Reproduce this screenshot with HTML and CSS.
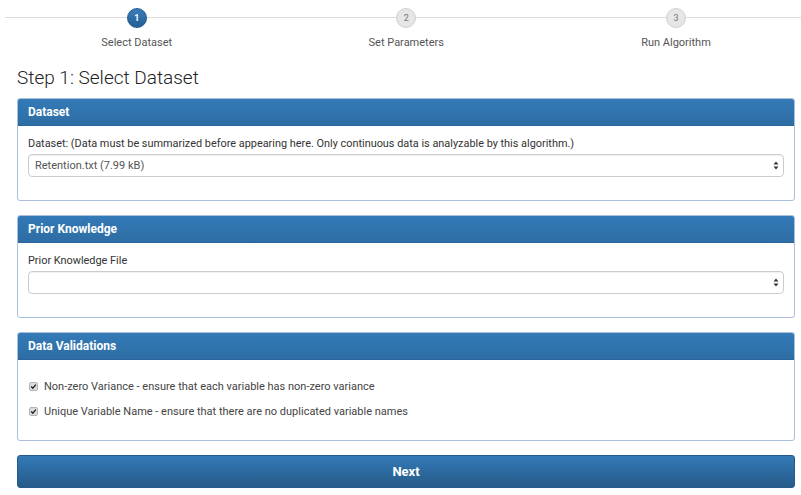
FILE: index.html
```html
<!DOCTYPE html>
<html>
<head>
<meta charset="utf-8">
<link rel="stylesheet" href="styles.css">
</head>
<body>
<div class="stepper">
  <div class="step active"><div class="dot">1</div><div class="step-label">Select Dataset</div></div>
  <div class="step"><div class="dot">2</div><div class="step-label">Set Parameters</div></div>
  <div class="step last"><div class="dot">3</div><div class="step-label">Run Algorithm</div></div>
</div>
<div class="content">
  <h2 class="title">Step 1: Select Dataset</h2>

  <div class="panel">
    <div class="panel-heading">Dataset</div>
    <div class="panel-body">
      <div class="label">Dataset: (Data must be summarized before appearing here. Only continuous data is analyzable by this algorithm.)</div>
      <div class="select"><span>Retention.txt (7.99 kB)</span>
        <svg class="arrows" width="6" height="9" viewBox="0 0 6 9"><path d="M3 0.5 L5.5 3.5 L0.5 3.5 Z M3 8.5 L5.5 5.5 L0.5 5.5 Z" fill="#333"/></svg>
      </div>
    </div>
  </div>

  <div class="panel">
    <div class="panel-heading">Prior Knowledge</div>
    <div class="panel-body">
      <div class="label">Prior Knowledge File</div>
      <div class="select"><span></span>
        <svg class="arrows" width="6" height="9" viewBox="0 0 6 9"><path d="M3 0.5 L5.5 3.5 L0.5 3.5 Z M3 8.5 L5.5 5.5 L0.5 5.5 Z" fill="#333"/></svg>
      </div>
    </div>
  </div>

  <div class="panel">
    <div class="panel-heading">Data Validations</div>
    <div class="panel-body checks">
      <div class="check-row">
        <svg class="cb" width="9" height="9" viewBox="0 0 9 9"><rect x="0.5" y="0.5" width="8" height="8" rx="1.5" fill="#dcdcdc" stroke="#b5b5b5"/><path d="M2.2 4.6 L3.8 6.2 L6.8 2.6" fill="none" stroke="#222" stroke-width="1.4"/></svg>
        <span>Non-zero Variance - ensure that each variable has non-zero variance</span>
      </div>
      <div class="check-row">
        <svg class="cb" width="9" height="9" viewBox="0 0 9 9"><rect x="0.5" y="0.5" width="8" height="8" rx="1.5" fill="#dcdcdc" stroke="#b5b5b5"/><path d="M2.2 4.6 L3.8 6.2 L6.8 2.6" fill="none" stroke="#222" stroke-width="1.4"/></svg>
        <span>Unique Variable Name - ensure that there are no duplicated variable names</span>
      </div>
    </div>
  </div>

  <div class="btn">Next</div>
</div>
</body>
</html>
```
FILE: styles.css
```css
body {
  margin: 0;
  font-family: Roboto, "Liberation Sans", sans-serif;
  font-size: 11px;
  color: #333;
  background: #fff;
}
.stepper {
  position: relative;
  display: grid;
  grid-template-columns: 269.5px 269.5px 1fr;
  padding-left: 2px;
  height: 52px;
}
.stepper::before {
  content: "";
  position: absolute;
  top: 17px;
  left: 5px;
  right: 0;
  height: 1px;
  background: #dcdcdc;
}
.step {
  position: relative;
  display: flex;
  flex-direction: column;
  align-items: center;
}
.step.last {
  padding-left: 10px;
}
.dot {
  margin-top: 8px;
  width: 20px;
  height: 20px;
  box-sizing: border-box;
  border-radius: 50%;
  background: #e6e6e6;
  border: 1px solid #d0d0d0;
  color: #777;
  font-size: 9px;
  line-height: 18px;
  text-align: center;
}
.step.active .dot {
  background: linear-gradient(#3a7dbb, #245f96);
  border-color: #245a8e;
  color: #fff;
  font-weight: bold;
}
.step-label {
  margin-top: 8px;
  line-height: 14px;
  font-size: 11px;
  color: #555;
}
.content {
  margin: 0 6px 0 17px;
}
.title {
  margin: 14px 0 8px;
  font-size: 19px;
  font-weight: 300;
  line-height: 24px;
  color: #222;
}
.panel {
  border: 1px solid #a9bfdb;
  border-radius: 3px;
  margin-bottom: 14px;
  background: #fff;
  overflow: hidden;
}
.panel-heading {
  height: 26px;
  line-height: 26px;
  padding: 0 10px;
  background: linear-gradient(#337ab7, #2e6da4);
  border-bottom: 1px solid #2b64a0;
  color: #fff;
  font-weight: bold;
  font-size: 12px;
}
.panel-body {
  padding: 10px 10px 23px;
}
.label {
  line-height: 15px;
  margin-bottom: 3px;
  color: #333;
  font-size: 10.9px;
}
.select {
  height: 23px;
  box-sizing: border-box;
  border: 1px solid #ccc;
  border-radius: 4px;
  box-shadow: inset 0 1px 1px rgba(0,0,0,0.06);
  display: flex;
  align-items: center;
  justify-content: space-between;
  padding: 0 4px 0 6px;
  color: #555;
  font-size: 11px;
}
.checks {
  padding: 19px 10px 21px;
  display: flex;
  flex-direction: column;
  gap: 10px;
}
.check-row {
  display: flex;
  align-items: center;
  gap: 6px;
  height: 15px;
  padding-left: 1px;
  color: #444;
}
.btn {
  height: 33px;
  box-sizing: border-box;
  border: 1px solid #245a8e;
  border-radius: 3px;
  background: linear-gradient(#337ab7, #265a88);
  color: #fff;
  font-weight: bold;
  font-size: 13px;
  line-height: 31px;
  text-align: center;
}
```
